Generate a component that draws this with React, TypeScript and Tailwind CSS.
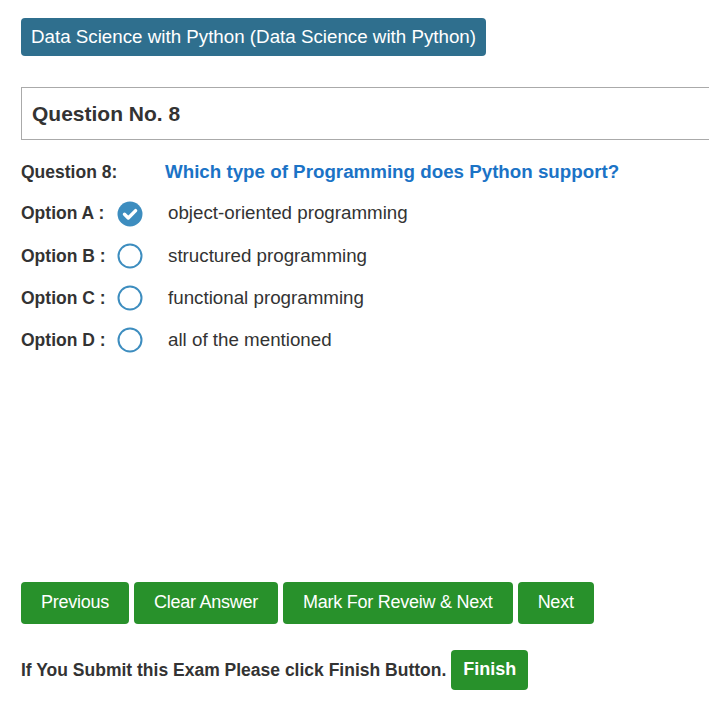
import React from "react";

const options = [
  { label: "Option A :", text: "object-oriented programming", checked: true },
  { label: "Option B :", text: "structured programming", checked: false },
  { label: "Option C :", text: "functional programming", checked: false },
  { label: "Option D :", text: "all of the mentioned", checked: false },
];

function Radio({ checked }: { checked: boolean }) {
  if (checked) {
    return (
      <svg width="26" height="26" viewBox="0 0 26 26">
        <circle cx="13" cy="13" r="12.5" fill="#3d8dbf" />
        <path d="M7.5 13.2 L11.3 17 L18.6 9.6" fill="none" stroke="#fff" strokeWidth="3.4" strokeLinecap="round" strokeLinejoin="round" />
      </svg>
    );
  }
  return (
    <svg width="26" height="26" viewBox="0 0 26 26">
      <circle cx="13" cy="13" r="11.5" fill="#fff" stroke="#3d8dbf" strokeWidth="2" />
    </svg>
  );
}

export default function App() {
  return (
    <div className="w-[709px] h-[722px] bg-white overflow-hidden pl-[21px] pt-[18px] text-[#333]" style={{ fontFamily: '"Liberation Sans", Arial, sans-serif' }}>
      <div className="inline-flex items-center h-[38px] px-[10px] rounded-[4px] bg-[#2f6f8e] text-white text-[18.75px] leading-none">
        Data Science with Python (Data Science with Python)
      </div>

      <div className="mt-[31px] h-[53px] border border-[#aaaaaa] border-r-0 flex items-center pl-[10px]">
        <span className="text-[21px] font-bold text-[#333]">Question No. 8</span>
      </div>

      <div className="mt-[19px] flex items-center h-[26px]">
        <span className="w-[144px] text-[17.5px] font-bold">Question 8:</span>
        <span className="text-[18.75px] font-bold text-[#1b73c6]">Which type of Programming does Python support?</span>
      </div>

      <div className="mt-[15.5px] flex flex-col gap-[16.3px]">
        {options.map((o) => (
          <div key={o.label} className="flex items-center h-[26px]">
            <span className="w-[96px] text-[17.5px] font-bold">{o.label}</span>
            <Radio checked={o.checked} />
            <span className="ml-[25px] text-[18.75px]">{o.text}</span>
          </div>
        ))}
      </div>

      <div className="mt-[228.5px] flex gap-[5px]">
        {["Previous", "Clear Answer", "Mark For Reveiw & Next", "Next"].map((b) => (
          <button key={b} className="h-[42px] px-[20px] rounded-[4px] bg-[#28912b] text-white text-[18px]" style={{ letterSpacing: "-0.25px" }}>
            {b}
          </button>
        ))}
      </div>

      <div className="mt-[26px] flex items-center">
        <span className="text-[17.5px] font-bold">If You Submit this Exam Please click Finish Button.</span>
        <button className="ml-[5px] h-[40px] px-[12px] rounded-[4px] bg-[#28912b] text-white text-[18px] font-bold">Finish</button>
      </div>
    </div>
  );
}
